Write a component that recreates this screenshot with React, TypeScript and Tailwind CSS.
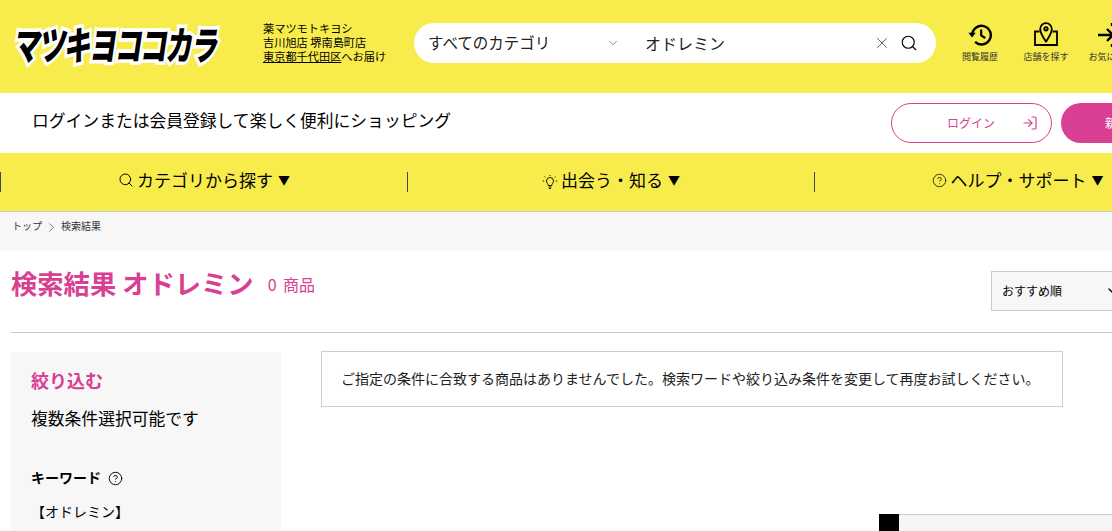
import { ChevronDown, ChevronRight, CircleHelp, LogIn, Search, X } from "lucide-react";

const FONT = "font-['Noto_Sans_CJK_JP','Noto_Sans',sans-serif]";

const HistoryIcon = () => (
  <svg width="26" height="26" viewBox="0 0 26 26" fill="none" stroke="#000" strokeWidth="2.4">
    <path d="M5.2 13a9.3 9.3 0 1 1 2.9 6.9" />
    <path d="M1.4 10.8h7.4l-3.7 4.6z" fill="#000" strokeWidth="0" />
    <path d="M14.2 7.4v6l4 2.6" strokeWidth="2.2" />
  </svg>
);

const StoreIcon = () => (
  <svg width="26" height="26" viewBox="0 0 26 26" fill="none" stroke="#000" strokeWidth="1.800">
    <path d="M6.500 9.500H2V23h22V9.500h-4.500" />
    <path d="M13 19.500C10 15 7.200 11.500 7.200 7a5.800 5.800 0 0 1 11.600 0c0 4.500-2.800 8-5.800 12.500z" />
    <circle cx="13" cy="6.800" r="1.700" />
  </svg>
);

const FavoriteIcon = () => (
  <svg width="26" height="26" viewBox="0 0 26 26" fill="none" stroke="#000" strokeWidth="2.400">
    <path d="M0 13h14M9 7l6 6-6 6" />
    <path d="M14 1v3M14 22v3" />
  </svg>
);

const BulbIcon = () => (
  <svg width="16" height="16" viewBox="0 0 16 16" fill="none" stroke="#000" strokeWidth="0.900">
    <path d="M6.200 11.500c0-1.800-1.700-2.400-1.700-4.500a3.500 3.500 0 0 1 7 0c0 2.100-1.700 2.700-1.700 4.500z" />
    <path d="M6.500 13h3M7 14.500h2" />
    <path d="M8 1V2M2.500 2.500l.8.800M13.500 2.500l-.8.800M.8 7h1.400M13.800 7h1.400" />
  </svg>
);

const Header = () => (
  <header className="h-[93px] bg-[#f8ec4c] flex items-start shrink-0">
    <div className="w-[222px] h-[86px] flex items-center shrink-0 pl-[15px]">
      <span className="text-[27px] leading-none font-black text-black tracking-[-1.600px] whitespace-nowrap origin-left -skew-x-12 scale-y-[1.45] [-webkit-text-stroke:5px_#fff] [paint-order:stroke_fill]">
        マツキヨココカラ
      </span>
    </div>
    <div className="ml-[41px] mt-[21px] w-[140px] shrink-0 text-[11.2px] leading-[14px] text-black whitespace-nowrap">
      <p>薬マツモトキヨシ</p>
      <p>吉川旭店 堺南島町店</p>
      <p>
        <span className="underline">東京都千代田区</span>へお届け
      </p>
    </div>
    <div className="ml-[11px] mt-[23px] w-[522px] h-10 bg-white rounded-[20px] flex items-center shrink-0">
      <span className="ml-[14px] w-[178px] text-[15.500px] text-[#222] whitespace-nowrap">すべてのカテゴリ</span>
      <ChevronDown size={14} strokeWidth={1} className="text-[#333]" />
      <span className="ml-[25px] text-[16px] text-[#222] whitespace-nowrap">オドレミン</span>
      <X size={18} strokeWidth={1.200} className="ml-auto text-[#555]" />
      <Search size={18} strokeWidth={1.500} className="ml-[9px] mr-[18px] text-black" />
    </div>
    <nav className="mt-[22px] ml-[14px] flex shrink-0">
      <a className="w-[60px] flex flex-col items-center">
        <HistoryIcon />
        <span className="mt-[2px] text-[9px] leading-[14px] text-[#333] whitespace-nowrap">閲覧履歴</span>
      </a>
      <a className="w-[66px] ml-[3px] flex flex-col items-center">
        <StoreIcon />
        <span className="mt-[2px] text-[9px] leading-[14px] text-[#333] whitespace-nowrap">店舗を探す</span>
      </a>
      <a className="w-[60px] ml-[2px] flex flex-col items-center">
        <FavoriteIcon />
        <span className="mt-[2px] text-[9px] leading-[14px] text-[#333] whitespace-nowrap">お気に入り</span>
      </a>
    </nav>
  </header>
);

const LoginBar = () => (
  <div className="h-[60px] bg-white flex items-center shrink-0 pl-[32px]">
    <p className="w-[859px] shrink-0 pb-1 text-[16.800px] text-black whitespace-nowrap">
      ログインまたは会員登録して楽しく便利にショッピング
    </p>
    <button className="w-[161px] h-10 shrink-0 rounded-[20px] border border-[#d93f92] flex items-center text-[#d93f92]">
      <span className="ml-[55px] text-[12px]">ログイン</span>
      <LogIn size={16} strokeWidth={1.800} className="ml-auto mr-[13px]" />
    </button>
    <button className="ml-[9px] w-[160px] h-10 shrink-0 rounded-[20px] bg-[#d93f92] text-white text-[12px] pl-[44px] text-left whitespace-nowrap">
      新規
    </button>
  </div>
);

const NavItem = ({ icon, label }: { icon: React.ReactNode; label: string }) => (
  <div className="w-[407px] shrink-0 h-5 border-l border-[#444] flex items-center justify-center gap-[3px] text-[17px] text-black whitespace-nowrap">
    {icon}
    <span className="pb-1">{label}</span>
    <span className="ml-[2px] pb-1 text-[12px]">▼</span>
  </div>
);

const MainNav = () => (
  <div className="h-[59px] bg-[#f8ec4c] border-b border-[#ccc] flex items-center shrink-0">
    <NavItem icon={<Search size={16} strokeWidth={1.500} className="mb-1" />} label="カテゴリから探す" />
    <NavItem icon={<BulbIcon />} label="出会う・知る" />
    <NavItem icon={<CircleHelp size={15} strokeWidth={1.200} className="mb-1" />} label="ヘルプ・サポート" />
  </div>
);

const Sidebar = () => (
  <aside className="w-[270px] h-[179px] shrink-0 mt-px bg-[#f7f7f7] pl-5 pt-[15px] overflow-hidden">
    <h2 className="text-[18px] leading-[26px] font-bold text-[#d93f92]">絞り込む</h2>
    <p className="mt-[12px] text-[16.800px] leading-[26px] text-black">複数条件選択可能です</p>
    <div className="mt-[34px] flex items-center gap-[7px]">
      <span className="text-[14px] leading-[24px] font-bold text-black">キーワード</span>
      <CircleHelp size={15} strokeWidth={1.500} className="text-black mt-[2px]" />
    </div>
    <p className="mt-[10px] text-[14px] leading-[24px] text-black">【オドレミン】</p>
  </aside>
);

export default function App() {
  return (
    <div className={`${FONT} relative w-[1112px] h-[531px] overflow-hidden bg-white flex flex-col`}>
      <Header />
      <LoginBar />
      <MainNav />
      <div className="h-[39px] bg-[#f7f7f7] flex items-start pt-[6px] pl-3 text-[10px] leading-[16px] text-[#333] shrink-0">
        <span>トップ</span>
        <ChevronRight size={15} strokeWidth={1} className="mx-[2px] mt-[2px]" />
        <span>検索結果</span>
      </div>
      <main className="px-[11px]">
        <div className="h-[82px] w-[1200px] pr-5 border-b border-[#ccc] flex items-start">
          <h1 className="mt-[14px] text-[26.300px] leading-[36px] font-bold text-[#d93f92] whitespace-nowrap">
            検索結果 オドレミン
          </h1>
          <span className="ml-[14px] mt-[21px] text-[16px] leading-[24px] text-[#d93f92] whitespace-nowrap [word-spacing:3px]">0 商品</span>
          <div className="ml-auto mt-[20px] w-[200px] h-10 bg-[#f7f7f7] border border-[#ccc] flex items-center pl-[10px] text-[12px] text-black">
            <span>おすすめ順</span>
            <ChevronDown size={16} strokeWidth={2} className="ml-[43px]" />
          </div>
        </div>
        <div className="mt-[18px] flex items-start">
          <Sidebar />
          <div className="ml-10 w-[742px] h-[56px] border border-[#ccc] flex items-center pl-[19px] pb-0.5 text-[14px] text-[#222] whitespace-nowrap">
            ご指定の条件に合致する商品はありませんでした。検索ワードや絞り込み条件を変更して再度お試しください。
          </div>
        </div>
      </main>
      <div className="absolute left-[879px] top-[514px] w-[233px] h-[17px] flex">
        <div className="w-5 bg-black" />
        <div className="flex-1 bg-[#f5f5f5] border-t border-[#ccc]" />
      </div>
    </div>
  );
}
